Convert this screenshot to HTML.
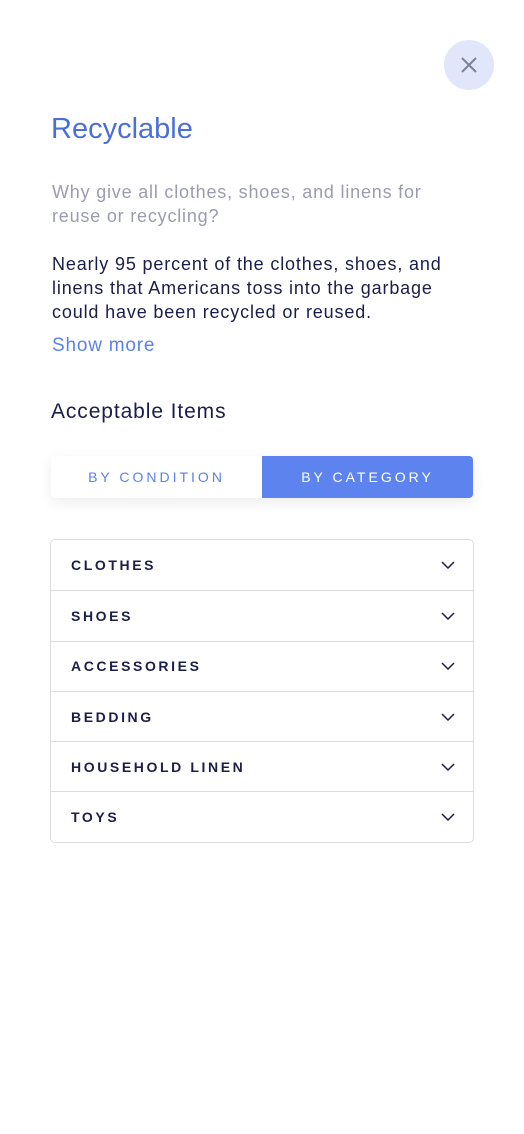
<!DOCTYPE html>
<html><head><meta charset="utf-8"><style>
*{margin:0;padding:0;box-sizing:border-box}
body{width:524px;height:1134px;background:#fff;font-family:"Liberation Sans",sans-serif;position:relative;overflow:hidden}
.close{position:absolute;left:444px;top:40px;width:50px;height:50px;border-radius:50%;background:#e1e6fa}
.close svg{position:absolute;left:15px;top:15px}
h1{position:absolute;left:51px;top:113px;font-size:29px;font-weight:normal;color:#4a6fd6;letter-spacing:0px}
.q{position:absolute;left:52px;top:180px;font-size:18px;line-height:24px;color:#9a9cb0;white-space:nowrap;letter-spacing:0.8px}
.p{position:absolute;left:52px;top:252px;font-size:18px;line-height:24px;color:#1b1d4a;white-space:nowrap;letter-spacing:0.85px}
.more{position:absolute;left:52px;top:335px;font-size:19px;color:#5b82ea;letter-spacing:0.8px}
h2{position:absolute;left:51px;top:400px;font-size:21px;font-weight:normal;color:#1b1d4a;letter-spacing:0.9px}
.tabs{position:absolute;left:51px;top:456px;width:422px;height:42px;border-radius:4px;box-shadow:0 4px 14px rgba(0,0,0,.08);display:flex;overflow:hidden;background:#fff}
.tabs div{flex:1;display:flex;align-items:center;justify-content:center;font-size:14px;letter-spacing:3px;color:#5b82ea}
.tabs .on{background:#5d84ee;color:#fff}
.list{position:absolute;left:50px;top:539px;width:424px;border:1px solid #dcdcdf;border-radius:5px}
.row{height:50.3px;border-top:1px solid #dcdcdf;display:flex;align-items:center;justify-content:space-between;padding:0 18px 0 20px;font-size:14px;letter-spacing:2.6px;color:#1b1d4a;font-weight:bold}
.row:first-child{border-top:none}
</style></head><body>
<div class="close"><svg width="20" height="20" viewBox="0 0 20 20"><path d="M3 3L17 17M17 3L3 17" stroke="#7f8296" stroke-width="2" fill="none"/></svg></div>
<h1>Recyclable</h1>
<div class="q">Why give all clothes, shoes, and linens for<br>reuse or recycling?</div>
<div class="p">Nearly 95 percent of the clothes, shoes, and<br>linens that Americans toss into the garbage<br>could have been recycled or reused.</div>
<div class="more">Show more</div>
<h2>Acceptable Items</h2>
<div class="tabs"><div>BY CONDITION</div><div class="on">BY CATEGORY</div></div>
<div class="list">
<div class="row">CLOTHES<svg width="14" height="8"><path d="M1 1L7 7L13 1" stroke="#1b1d4a" stroke-width="1.5" fill="none"/></svg></div>
<div class="row">SHOES<svg width="14" height="8"><path d="M1 1L7 7L13 1" stroke="#1b1d4a" stroke-width="1.5" fill="none"/></svg></div>
<div class="row">ACCESSORIES<svg width="14" height="8"><path d="M1 1L7 7L13 1" stroke="#1b1d4a" stroke-width="1.5" fill="none"/></svg></div>
<div class="row">BEDDING<svg width="14" height="8"><path d="M1 1L7 7L13 1" stroke="#1b1d4a" stroke-width="1.5" fill="none"/></svg></div>
<div class="row">HOUSEHOLD LINEN<svg width="14" height="8"><path d="M1 1L7 7L13 1" stroke="#1b1d4a" stroke-width="1.5" fill="none"/></svg></div>
<div class="row">TOYS<svg width="14" height="8"><path d="M1 1L7 7L13 1" stroke="#1b1d4a" stroke-width="1.5" fill="none"/></svg></div>
</div>
</body></html>
